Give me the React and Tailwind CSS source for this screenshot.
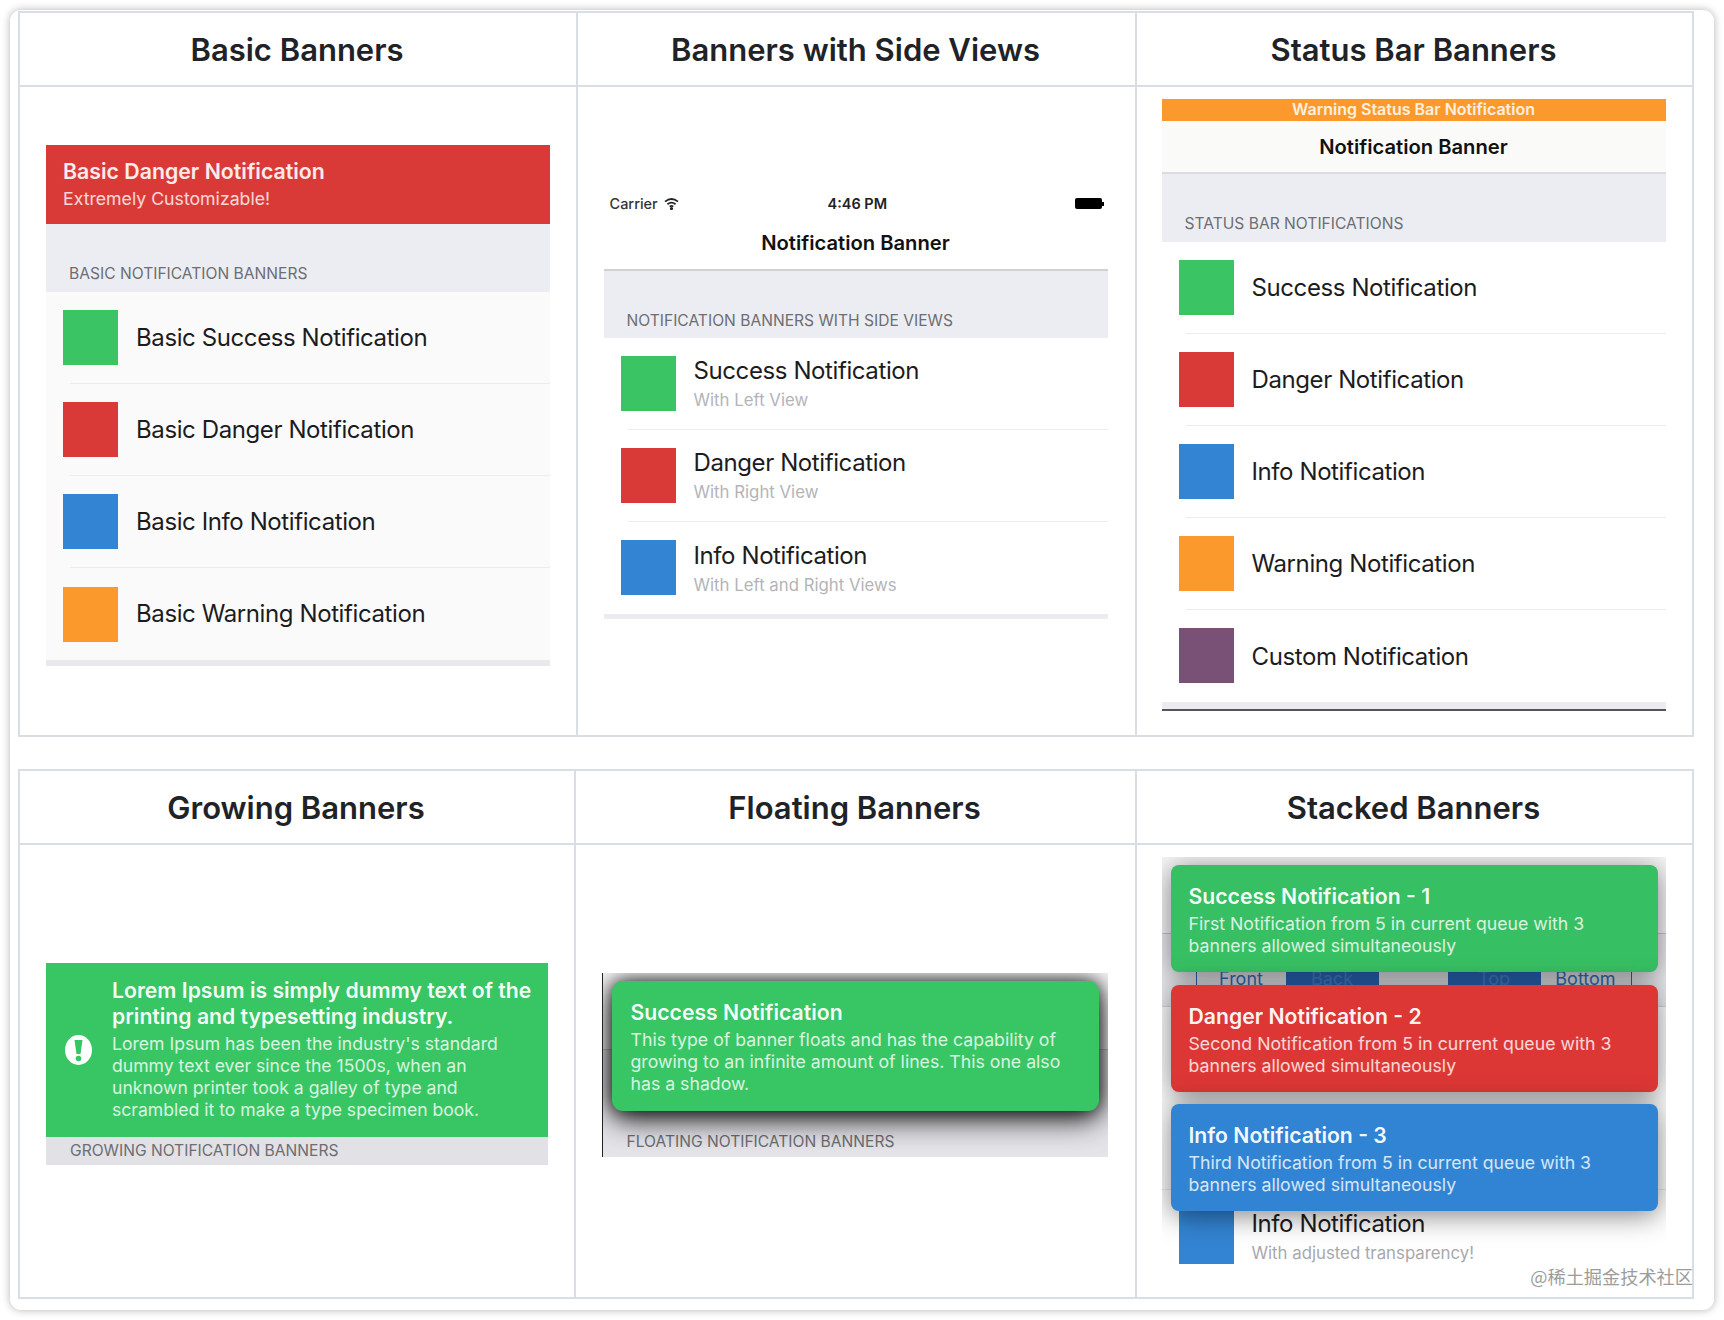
const basicRows = ['Basic Success Notification', 'Basic Danger Notification', 'Basic Info Notification', 'Basic Warning Notification'];
const green = 'bg-[#3bc463]';
const red = 'bg-[#d93a37]';
const blue = 'bg-[#3384d3]';
const orange = 'bg-[#fb992c]';
const purple = 'bg-[#7a5176]';
const basicColors = [green, red, blue, orange];

function Heading({ children, className = '' }) {
  return (
    <div className={`flex-1 flex items-center justify-center pr-[2px] text-[31px] leading-none font-semibold text-[#1f2328] ${className}`}>
      {children}
    </div>
  );
}

function Label({ children, className = '' }) {
  return <div className={`text-[15.6px] leading-5 text-[#6d6d72] ${className}`}>{children}</div>;
}

function Row({ color, title, sub, last, nudge, bg = 'bg-white' }) {
  return (
    <div className={`h-[92px] ${bg}`}>
      <div className={`ml-[24px] h-full flex items-center gap-[18px] ${last ? '' : 'border-b border-[#ececf0]'}`}>
        <div className={`w-[55px] h-[55px] -ml-[7px] shrink-0 ${color}`} />
        <div className={sub || nudge ? 'pt-[2px]' : ''}>
          <div className="text-[24px] leading-[30px] tracking-[-0.4px] text-[#1c1c1e]">{title}</div>
          {sub && <div className="mt-[2px] text-[16.8px] leading-[24px] text-[#b4b4b8]">{sub}</div>}
        </div>
      </div>
    </div>
  );
}

function BasicPanel() {
  return (
    <div className="w-[504px] mt-[2px]">
      <div className={`h-[79px] pl-[17px] pt-[13px] text-white ${red}`}>
        <div className="text-[21.3px] leading-[27px] font-semibold text-white/90">Basic Danger Notification</div>
        <div className="mt-[1px] text-[17.7px] leading-[26px] text-white/80">Extremely Customizable!</div>
      </div>
      <div className="h-[68px] bg-[#ecedf2] pl-[23px] pt-[40px]">
        <Label>BASIC NOTIFICATION BANNERS</Label>
      </div>
      {basicRows.map((t, i) => (
        <Row key={t} title={t} color={basicColors[i]} last={i === 3} bg="bg-[#fafafa]" />
      ))}
      <div className="h-[6px] bg-[#e8e8ed]" />
    </div>
  );
}

function SidePanel() {
  return (
    <div className="w-[504px] -ml-[2px]">
      <div className="h-[26px] flex items-center justify-between pl-[6px] pr-[4px] relative">
        <div className="flex items-center gap-[6px] text-[14.5px] text-[#333] font-medium">
          Carrier
          <svg width="15" height="12" viewBox="0 0 15 12" fill="none" stroke="#222" strokeWidth="1.8">
            <path d="M1 3.6C5 .4 10 .4 14 3.6" />
            <path d="M3.4 6.2c2.6-2 5.6-2 8.2 0" />
            <path d="M5.7 8.6c1.2-.9 2.4-.9 3.6 0" />
            <circle cx="7.5" cy="10.6" r=".7" fill="#222" />
          </svg>
        </div>
        <div className="absolute left-[224px] text-[14.5px] font-semibold text-[#222]">4:46 PM</div>
        <div className="flex items-center">
          <div className="w-[27px] h-[11px] rounded-[2px] bg-black" />
          <div className="w-[2px] h-[4px] bg-black" />
        </div>
      </div>
      <div className="h-[54px] pt-[2px] border-b-2 border-[#d0d0d5] flex items-center justify-center text-[20.2px] font-semibold text-[#111]">
        Notification Banner
      </div>
      <div className="h-[67px] bg-[#ecedf2] pl-[23px] pt-[40px]">
        <Label>NOTIFICATION BANNERS WITH SIDE VIEWS</Label>
      </div>
      <Row color={green} title="Success Notification" sub="With Left View" />
      <Row color={red} title="Danger Notification" sub="With Right View" />
      <Row color={blue} title="Info Notification" sub="With Left and Right Views" last />
      <div className="h-[5px] bg-[#ebebf0]" />
    </div>
  );
}

function StatusPanel() {
  return (
    <div className="w-[504px] -ml-[2px]">
      <div className={`h-[22px] pb-[2px] flex items-center justify-center text-[16px] font-semibold text-white/85 ${orange}`}>
        Warning Status Bar Notification
      </div>
      <div className="h-[53px] pt-[3px] bg-[#fafaf8] border-b-2 border-[#dcdce0] flex items-center justify-center text-[20.2px] font-semibold text-[#111]">
        Notification Banner
      </div>
      <div className="h-[68px] bg-[#ecedf2] pl-[23px] pt-[40px]">
        <Label>STATUS BAR NOTIFICATIONS</Label>
      </div>
      <Row nudge color={green} title="Success Notification" />
      <Row nudge color={red} title="Danger Notification" />
      <Row nudge color={blue} title="Info Notification" />
      <Row nudge color={orange} title="Warning Notification" />
      <Row nudge color={purple} title="Custom Notification" last />
      <div className="h-[7px] bg-[#ebebf0]" />
      <div className="h-[2px] bg-[#55555a]" />
    </div>
  );
}

function GrowingPanel() {
  return (
    <div className="w-[502px] -mt-[2px]">
      <div className="h-[174px] bg-[#37c663] flex text-white">
        <div className="w-[66px] pl-[19px] flex items-center shrink-0">
          <svg width="27" height="30" viewBox="0 0 27 30">
            <ellipse cx="13.5" cy="15" rx="13.5" ry="15" fill="#fff" />
            <path d="M9.5 5h8l-2 14h-4z" fill="#37c663" />
            <circle cx="13.5" cy="23.5" r="2.8" fill="#37c663" />
          </svg>
        </div>
        <div className="pt-[14px]">
          <div className="text-[21.2px] leading-[26px] font-semibold text-white/95">
            Lorem Ipsum is simply dummy text of the<br />printing and typesetting industry.
          </div>
          <div className="mt-[4px] text-[17.6px] leading-[22px] text-white/80">
            Lorem Ipsum has been the industry's standard<br />
            dummy text ever since the 1500s, when an<br />
            unknown printer took a galley of type and<br />
            scrambled it to make a type specimen book.
          </div>
        </div>
      </div>
      <div className="h-[28px] bg-[#e1e1e6] pl-[24px] flex items-center">
        <Label className="text-[#5f5f64]">GROWING NOTIFICATION BANNERS</Label>
      </div>
    </div>
  );
}

function Banner({ color, title, lines, className = '' }) {
  return (
    <div className={`absolute text-white ${color} ${className}`}>
      <div className="text-[21.2px] leading-[26px] font-semibold text-white/95">{title}</div>
      <div className="mt-[4px] text-[17.7px] leading-[22px] text-white/80">
        {lines.map(l => <div key={l}>{l}</div>)}
      </div>
    </div>
  );
}

function FloatingPanel() {
  return (
    <div className="w-[506px] h-[184px] -ml-[2px] relative overflow-hidden border-l border-[#222] flex flex-col">
      <div className="h-[77px] bg-[#f7f7f7] border-b border-[#c8c8cc]" />
      <div className="flex-1 bg-[#e4e4e9] pl-[24px] pt-[82px]">
        <Label className="text-[#5f5f64]">FLOATING NOTIFICATION BANNERS</Label>
      </div>
      <Banner
        color="bg-[#37c663]"
        className="left-[9px] top-[8px] w-[487px] h-[130px] rounded-[11px] pl-[19px] pt-[18px] shadow-[0_0_18px_rgba(0,0,0,0.7),0_8px_30px_rgba(0,0,0,0.85)]"
        title="Success Notification"
        lines={['This type of banner floats and has the capability of', 'growing to an infinite amount of lines. This one also', 'has a shadow.']}
      />
    </div>
  );
}

function StackedPanel() {
  const card = 'left-[9px] w-[487px] rounded-[8px] pl-[18px] pt-[18px] h-[107px] shadow-[0_4px_28px_rgba(0,0,0,0.5)]';
  return (
    <div className="w-[504px] h-[414px] -ml-[2px] -mt-[2px] relative overflow-hidden">
      <div className="h-[77px] bg-[#f7f7f7] border-b border-[#c8c8cc]" />
      <div className="h-[73px] bg-[#ecedf2] border-b border-[#d8d8dc] pt-[30px] pl-[34px]">
        <div className="flex h-[30px] text-[18px] leading-[30px] text-center text-[#3a72bd]">
          <div className="w-[90px] border-l border-[#2a6bc0]">Front</div>
          <div className="w-[93px] bg-[#2a6bc0] text-[#4b84cc]">Back</div>
          <div className="w-[69px]" />
          <div className="w-[93px] bg-[#2a6bc0] text-[#4b84cc]">Top</div>
          <div className="w-[91px] border-r border-[#2a6bc0]">Bottom</div>
        </div>
      </div>
      <div className="h-[183px] bg-white border-b border-[#ececf0]" />
      <div className="ml-[17px] flex gap-[18px] pt-[20px]">
        <div className={`w-[55px] h-[54px] shrink-0 ${blue}`} />
        <div className="-mt-[1px]">
          <div className="text-[24px] leading-[30px] tracking-[-0.4px] text-[#1c1c1e]">Info Notification</div>
          <div className="mt-[2px] text-[16.8px] leading-[24px] text-[#a8a8ac]">With adjusted transparency!</div>
        </div>
      </div>
      <Banner
        color="bg-[#37bf63]"
        className={`top-[8px] ${card}`}
        title="Success Notification - 1"
        lines={['First Notification from 5 in current queue with 3', 'banners allowed simultaneously']}
      />
      <Banner
        color="bg-[#dc3735]"
        className={`top-[128px] ${card}`}
        title="Danger Notification - 2"
        lines={['Second Notification from 5 in current queue with 3', 'banners allowed simultaneously']}
      />
      <Banner
        color="bg-[#3084d3]"
        className={`top-[247px] ${card}`}
        title="Info Notification - 3"
        lines={['Third Notification from 5 in current queue with 3', 'banners allowed simultaneously']}
      />
    </div>
  );
}

function Table({ titles, widths, bodyHeight, children, className = '' }) {
  return (
    <div className={`w-[1676px] border-2 border-[#d8dee4] ${className}`}>
      <div className="flex h-[74px] border-b-2 border-[#d8dee4]">
        {titles.map((t, i) => (
          <Heading key={t} className={`${widths[i]} flex-none ${i > 0 ? 'border-l-2 border-[#d8dee4]' : ''}`}>{t}</Heading>
        ))}
      </div>
      <div className={`flex ${bodyHeight}`}>
        {children.map((c, i) => (
          <div key={i} className={`${widths[i]} flex items-center justify-center pb-[13px] ${i > 0 ? 'border-l-2 border-[#d8dee4]' : ''}`}>
            {c}
          </div>
        ))}
      </div>
    </div>
  );
}

export default function App() {
  return (
    <div className="w-[1724px] h-[1320px] bg-white pt-[10px] pl-[10px] font-['Inter',sans-serif]">
      <div className="relative w-[1704px] h-[1300px] bg-white rounded-[11px] pl-[8px] pt-[1px] shadow-[0_0_9px_rgba(0,0,0,0.3)]">
        <Table
          titles={['Basic Banners', 'Banners with Side Views', 'Status Bar Banners']}
          widths={['w-[556px]', 'w-[559px]', 'w-[557px]']}
          bodyHeight="h-[648px]"
        >
          {[<BasicPanel />, <SidePanel />, <StatusPanel />]}
        </Table>
        <Table
          className="mt-[32px]"
          titles={['Growing Banners', 'Floating Banners', 'Stacked Banners']}
          widths={['w-[554px]', 'w-[561px]', 'w-[557px]']}
          bodyHeight="h-[452px]"
        >
          {[<GrowingPanel />, <FloatingPanel />, <StackedPanel />]}
        </Table>
        <div className="absolute right-[21px] bottom-[23px] text-[18.2px] leading-[22px] text-[#9c9c9c] font-['Noto_Sans_CJK_SC',sans-serif]">
          @稀土掘金技术社区
        </div>
      </div>
    </div>
  );
}
